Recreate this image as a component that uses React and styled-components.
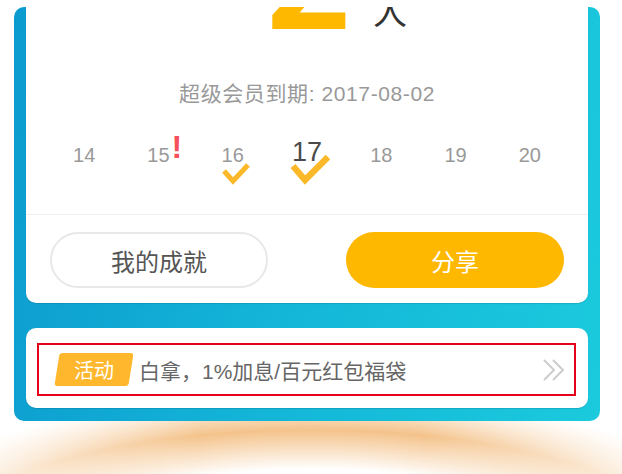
import styled, { createGlobalStyle } from "styled-components";

const GlobalStyle = createGlobalStyle`
  html, body {
    margin: 0;
    padding: 0;
    background: #ffffff;
    font-family: "Liberation Sans", "Noto Sans CJK SC", sans-serif;
  }
`;

const Page = styled.div`
  width: 622px;
  height: 474px;
  overflow: hidden;
  display: flex;
  flex-direction: column;
`;

const Panel = styled.section`
  position: relative;
  z-index: 1;
  margin: 7px 22px 0 14px;
  padding: 0 12px 13px;
  border-radius: 10px;
  background: linear-gradient(100deg, #0c9bcf 0%, #14b6d8 50%, #1bcadd 100%);
  display: flex;
  flex-direction: column;
  gap: 25px;
`;

const Card = styled.div`
  background: #ffffff;
  border-radius: 10px;
  box-shadow: 0 1px 1px rgba(0, 60, 90, 0.18);
`;

const SignCard = styled(Card)`
  border-radius: 0 0 10px 10px;
  overflow: hidden;
  display: flex;
  flex-direction: column;
`;

const Hero = styled.div`
  height: 23px;
  display: flex;
  justify-content: center;
  align-items: flex-end;
  gap: 22px;
  padding-left: 58px;
  overflow: hidden;
`;

const BigNum = styled.span`
  font-family: Roboto, "Liberation Sans", sans-serif;
  font-weight: 700;
  font-size: 150px;
  line-height: 0.72;
  color: #ffb800;
  margin-bottom: -2px;
`;

const Unit = styled.span`
  font-family: "Noto Sans CJK SC", sans-serif;
  font-size: 34px;
  line-height: 1;
  color: #333333;
  margin-bottom: 2px;
`;

const Expiry = styled.div`
  margin-top: 52px;
  text-align: center;
  font-size: 21px;
  letter-spacing: 0.6px;
  line-height: 24px;
  color: #999999;
`;

const Days = styled.div`
  margin-top: 33px;
  padding: 0 21px;
  display: grid;
  grid-template-columns: repeat(7, 1fr);
  align-items: end;
`;

const Day = styled.div`
  text-align: center;
`;

const DayNum = styled.span`
  position: relative;
  display: inline-block;
  font-size: ${(p) => (p.$today ? "27px" : "20px")};
  line-height: 1;
  color: ${(p) => (p.$today ? "#4a4a4a" : "#999999")};
`;

const Alert = styled.span`
  position: absolute;
  left: calc(100% + 2px);
  top: -14px;
  font-size: 32px;
  font-weight: 700;
  line-height: 1;
  color: #f6505c;
`;

const CheckMark = styled.svg`
  position: absolute;
  left: ${(p) => (p.$big ? "-2px" : "0")};
  top: ${(p) => (p.$big ? "13px" : "17px")};
  width: ${(p) => (p.$big ? "40px" : "28px")};
  height: ${(p) => (p.$big ? "33px" : "23px")};
`;

const Divider = styled.div`
  margin-top: 48px;
  height: 1px;
  background: #eeeeee;
`;

const Actions = styled.div`
  margin-top: 17px;
  padding: 0 24px 15px;
  display: flex;
  justify-content: space-between;
`;

const PillButton = styled.button`
  width: 218px;
  height: 56px;
  border-radius: 28px;
  font-family: "Liberation Sans", "Noto Sans CJK SC", sans-serif;
  font-size: 24px;
  cursor: pointer;
  border: ${(p) => (p.$primary ? "none" : "2px solid #e8e8e8")};
  background: ${(p) => (p.$primary ? "#ffb800" : "#ffffff")};
  color: ${(p) => (p.$primary ? "#ffffff" : "#555555")};
`;

const PromoCard = styled(Card)`
  padding: 15px 12px 12px 11px;
`;

const PromoRow = styled.div`
  height: 53px;
  box-sizing: border-box;
  border: 2px solid #e60019;
  display: flex;
  align-items: center;
  padding: 0 8px 0 18px;
`;

const Tag = styled.span`
  width: 74px;
  height: 33px;
  border-radius: 3px;
  background: #ffb82e;
  transform: skewX(-9deg);
  display: flex;
  align-items: center;
  justify-content: center;
  color: #ffffff;
  font-size: 20px;
`;

const TagText = styled.span`
  transform: skewX(9deg);
`;

const PromoText = styled.span`
  flex: 1;
  margin-left: 8px;
  font-size: 21px;
  color: #666666;
`;

const Glow = styled.div`
  flex: 1;
  margin-top: -14px;
  background: radial-gradient(
    ellipse 400px 140px at 50% 163px,
    rgba(255, 255, 255, 0) 72%,
    rgba(240, 172, 95, 0.72) 100%,
    rgba(255, 255, 255, 0) 124%
  );
  mask-image: linear-gradient(
    to right,
    rgba(0, 0, 0, 0.3),
    #000 32%,
    #000 68%,
    rgba(0, 0, 0, 0.3)
  );
`;

const days = [
  { n: 14 },
  { n: 15, alert: true },
  { n: 16, checked: true },
  { n: 17, checked: true, today: true },
  { n: 18 },
  { n: 19 },
  { n: 20 },
];

function Check({ big }) {
  return big ? (
    <CheckMark $big viewBox="0 0 40 33">
      <path d="M3 14 L15 28 L38 5" fill="none" stroke="#fbb829" strokeWidth="6.5" />
    </CheckMark>
  ) : (
    <CheckMark viewBox="0 0 28 23">
      <path d="M2 9 L11 19 L26 3" fill="none" stroke="#fbb829" strokeWidth="5" />
    </CheckMark>
  );
}

function DoubleChevron() {
  return (
    <svg width="24" height="24" viewBox="0 0 24 24">
      <path
        d="M2 2 L12 12 L2 22 M11 2 L21 12 L11 22"
        fill="none"
        stroke="#cccccc"
        strokeWidth="2"
      />
    </svg>
  );
}

export default function App() {
  return (
    <Page>
      <GlobalStyle />
      <Panel>
        <SignCard>
          <Hero>
            <BigNum>2</BigNum>
            <Unit>人</Unit>
          </Hero>
          <Expiry>超级会员到期: 2017-08-02</Expiry>
          <Days>
            {days.map((d) => (
              <Day key={d.n}>
                <DayNum $today={d.today}>
                  {d.n}
                  {d.alert && <Alert>!</Alert>}
                  {d.checked && <Check big={d.today} />}
                </DayNum>
              </Day>
            ))}
          </Days>
          <Divider />
          <Actions>
            <PillButton>我的成就</PillButton>
            <PillButton $primary>分享</PillButton>
          </Actions>
        </SignCard>
        <PromoCard>
          <PromoRow>
            <Tag>
              <TagText>活动</TagText>
            </Tag>
            <PromoText>白拿，1%加息/百元红包福袋</PromoText>
            <DoubleChevron />
          </PromoRow>
        </PromoCard>
      </Panel>
      <Glow />
    </Page>
  );
}
